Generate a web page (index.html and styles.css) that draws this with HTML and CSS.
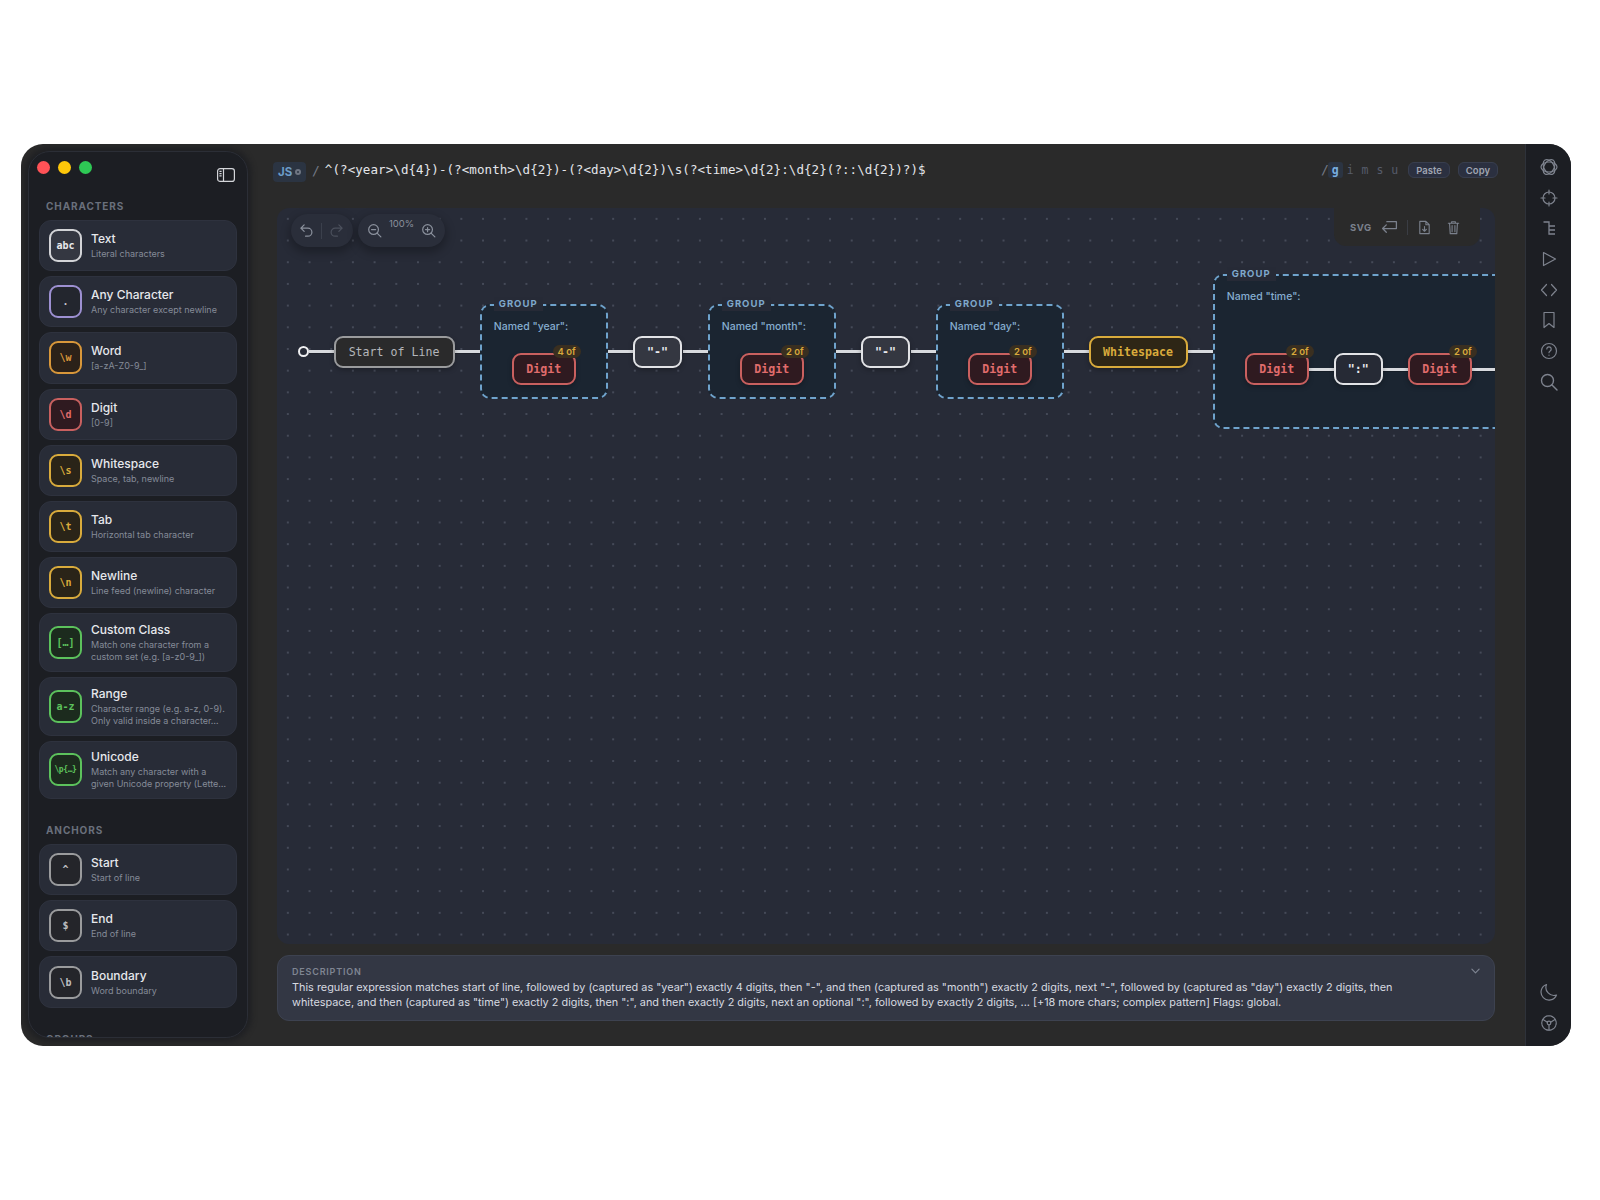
FILE: index.html
```html
<!DOCTYPE html>
<html lang="en">
<head>
    <meta charset="UTF-8">
    <title>Regex Builder</title>
    <link rel="stylesheet" href="styles.css">
</head>
<body>
    <div class="window">
        <aside class="sidebar">
            <div class="side-top">
                <div class="lights">
                    <span class="light red"></span>
                    <span class="light yellow"></span>
                    <span class="light green"></span>
                </div>
                <svg class="side-toggle" viewBox="0 0 18 14" fill="none" stroke="currentColor" stroke-width="1.2">
                    <rect x="0.6" y="0.6" width="16.8" height="12.8" rx="2.5"/>
                    <path d="M6.5 0.6v12.8M2.4 3.4h2.2M2.4 5.6h2.2M2.4 7.8h2.2" />
                </svg>
            </div>

            <h3 class="section-label">Characters</h3>
            <div class="cards">
                <div class="card"><span class="glyph g-text">abc</span><div class="card-text"><b>Text</b><small>Literal characters</small></div></div>
                <div class="card"><span class="glyph g-any">.</span><div class="card-text"><b>Any Character</b><small>Any character except newline</small></div></div>
                <div class="card"><span class="glyph g-word">\w</span><div class="card-text"><b>Word</b><small>[a-zA-Z0-9_]</small></div></div>
                <div class="card"><span class="glyph g-digit">\d</span><div class="card-text"><b>Digit</b><small>[0-9]</small></div></div>
                <div class="card"><span class="glyph g-space">\s</span><div class="card-text"><b>Whitespace</b><small>Space, tab, newline</small></div></div>
                <div class="card"><span class="glyph g-space">\t</span><div class="card-text"><b>Tab</b><small>Horizontal tab character</small></div></div>
                <div class="card"><span class="glyph g-space">\n</span><div class="card-text"><b>Newline</b><small>Line feed (newline) character</small></div></div>
                <div class="card"><span class="glyph g-class">[…]</span><div class="card-text"><b>Custom Class</b><small>Match one character from a<br>custom set (e.g. [a-z0-9_])</small></div></div>
                <div class="card"><span class="glyph g-class">a-z</span><div class="card-text"><b>Range</b><small>Character range (e.g. a-z, 0-9).<br>Only valid inside a character…</small></div></div>
                <div class="card"><span class="glyph g-class g-small">\p{…}</span><div class="card-text"><b>Unicode</b><small>Match any character with a<br>given Unicode property (Lette…</small></div></div>
            </div>

            <h3 class="section-label spaced">Anchors</h3>
            <div class="cards">
                <div class="card"><span class="glyph g-anchor">^</span><div class="card-text"><b>Start</b><small>Start of line</small></div></div>
                <div class="card"><span class="glyph g-anchor">$</span><div class="card-text"><b>End</b><small>End of line</small></div></div>
                <div class="card"><span class="glyph g-anchor">\b</span><div class="card-text"><b>Boundary</b><small>Word boundary</small></div></div>
            </div>

            <h3 class="section-label spaced">Groups</h3>
        </aside>

        <main class="main">
            <header class="regex-bar">
                <span class="lang">JS<i></i></span>
                <span class="slash">/</span>
                <code class="pattern">^(?&lt;year&gt;\d{4})-(?&lt;month&gt;\d{2})-(?&lt;day&gt;\d{2})\s(?&lt;time&gt;\d{2}:\d{2}(?::\d{2})?)$</code>
                <div class="flags">
                    <span class="slash">/</span>
                    <span class="flag on">g</span>
                    <span class="flag">i</span>
                    <span class="flag">m</span>
                    <span class="flag">s</span>
                    <span class="flag">u</span>
                </div>
                <button class="pill">Paste</button>
                <button class="pill">Copy</button>
            </header>

            <section class="canvas">
                <div class="tools-left">
                    <div class="tool-pill history">
                        <svg class="ico" viewBox="0 0 16 16" fill="none" stroke="currentColor" stroke-width="1.3" stroke-linecap="round" stroke-linejoin="round"><path d="M5.5 2L2 5.5 5.5 9M2 5.5h7.5a4.2 4.2 0 010 8.5H7"/></svg>
                        <span class="tool-sep"></span>
                        <svg class="ico dim" viewBox="0 0 16 16" fill="none" stroke="currentColor" stroke-width="1.3" stroke-linecap="round" stroke-linejoin="round"><path d="M10.5 2L14 5.5 10.5 9M14 5.5H6.500a4.200 4.200 0 000 8.500H9"/></svg>
                    </div>
                    <div class="tool-pill zoom">
                        <svg class="ico" viewBox="0 0 16 16" fill="none" stroke="currentColor" stroke-width="1.3" stroke-linecap="round"><circle cx="7" cy="7" r="5.2"/><path d="M11 11l3.800 3.800M4.800 7h4.400"/></svg>
                        <span class="zoom-val">100%</span>
                        <svg class="ico" viewBox="0 0 16 16" fill="none" stroke="currentColor" stroke-width="1.3" stroke-linecap="round"><circle cx="7" cy="7" r="5.2"/><path d="M11 11l3.800 3.800M4.800 7h4.400M7 4.800v4.400"/></svg>
                    </div>
                </div>

                <div class="tools-right">
                    <span class="svg-label">SVG</span>
                    <svg class="ico wide" viewBox="0 0 16 14" fill="none" stroke="currentColor" stroke-width="1.2" stroke-linecap="round" stroke-linejoin="round"><path d="M5.500 1.500h9v6.500H1.500M5 4.500L1.500 8 5 11.500"/></svg>
                    <span class="tool-sep tall"></span>
                    <svg class="ico" viewBox="0 0 16 16" fill="none" stroke="currentColor" stroke-width="1.2" stroke-linecap="round" stroke-linejoin="round"><path d="M3 1.500h6.500L13 5v9.500H3zM9.500 1.500V5H13M8 7v5M6 10l2 2 2-2"/></svg>
                    <svg class="ico" viewBox="0 0 16 16" fill="none" stroke="currentColor" stroke-width="1.2" stroke-linecap="round" stroke-linejoin="round"><path d="M2.500 3.500h11M6 3.500V1.800h4v1.700M3.800 3.500l.7 11h7l.7-11M6.500 6v6.500M9.500 6v6.500"/></svg>
                </div>

                <div class="track">
                    <span class="origin"></span>
                    <span class="wire"></span>
                    <div class="node anchor">Start of Line</div>
                    <span class="wire"></span>

                    <div class="group">
                        <span class="group-tag">GROUP</span>
                        <p class="group-name">Named "year":</p>
                        <div class="node digit">Digit<span class="badge">4 of</span></div>
                    </div>
                    <span class="wire"></span>
                    <div class="node lit">"-"</div>
                    <span class="wire"></span>

                    <div class="group">
                        <span class="group-tag">GROUP</span>
                        <p class="group-name">Named "month":</p>
                        <div class="node digit">Digit<span class="badge">2 of</span></div>
                    </div>
                    <span class="wire"></span>
                    <div class="node lit">"-"</div>
                    <span class="wire"></span>

                    <div class="group">
                        <span class="group-tag">GROUP</span>
                        <p class="group-name">Named "day":</p>
                        <div class="node digit">Digit<span class="badge">2 of</span></div>
                    </div>
                    <span class="wire"></span>
                    <div class="node space">Whitespace</div>
                    <span class="wire"></span>

                    <div class="group time">
                        <span class="group-tag">GROUP</span>
                        <p class="group-name">Named "time":</p>
                        <div class="group-row">
                            <div class="node digit">Digit<span class="badge">2 of</span></div>
                            <span class="wire short"></span>
                            <div class="node lit colon">":"</div>
                            <span class="wire short"></span>
                            <div class="node digit">Digit<span class="badge">2 of</span></div>
                            <span class="wire short"></span>
                        </div>
                    </div>
                </div>
            </section>

            <section class="description">
                <div class="desc-head">
                    <span>DESCRIPTION</span>
                    <svg viewBox="0 0 10 6" fill="none" stroke="currentColor" stroke-width="1.300" stroke-linecap="round" stroke-linejoin="round"><path d="M1 1l4 4 4-4"/></svg>
                </div>
                <p>This regular expression matches start of line, followed by (captured as "year") exactly 4 digits, then "-", and then (captured as "month") exactly 2 digits, next "-", followed by (captured as "day") exactly 2 digits, then whitespace, and then (captured as "time") exactly 2 digits, then ":", and then exactly 2 digits, next an optional ":", followed by exactly 2 digits, ... [+18 more chars; complex pattern] Flags: global.</p>
            </section>
        </main>

        <nav class="rail">
            <svg viewBox="0 0 18 18" fill="none" stroke="currentColor" stroke-width="1.200"><ellipse cx="9" cy="9" rx="8" ry="5"/><ellipse cx="9" cy="9" rx="8" ry="5" transform="rotate(60 9 9)"/><ellipse cx="9" cy="9" rx="8" ry="5" transform="rotate(120 9 9)"/></svg>
            <svg viewBox="0 0 18 18" fill="none" stroke="currentColor" stroke-width="1.200" stroke-linecap="round"><circle cx="9" cy="9" r="6"/><path d="M9 1v4M9 13v4M1 9h4M13 9h4"/></svg>
            <svg viewBox="0 0 18 18" fill="none" stroke="currentColor" stroke-width="1.300"><path d="M3.500 3h5.500v12h6M9 7h6M9 11h6"/></svg>
            <svg viewBox="0 0 18 18" fill="none" stroke="currentColor" stroke-width="1.200" stroke-linejoin="round"><path d="M3.500 2.500L15.500 9 3.500 15.500z"/></svg>
            <svg viewBox="0 0 18 18" fill="none" stroke="currentColor" stroke-width="1.200" stroke-linecap="round" stroke-linejoin="round"><path d="M6.500 3.500L1.500 9l5 5.500M11.500 3.500l5 5.500-5 5.500"/></svg>
            <svg viewBox="0 0 18 18" fill="none" stroke="currentColor" stroke-width="1.200" stroke-linejoin="round"><path d="M4 1.500h10v15l-5-4-5 4z"/></svg>
            <svg viewBox="0 0 18 18" fill="none" stroke="currentColor" stroke-width="1.200" stroke-linecap="round"><circle cx="9" cy="9" r="7.500"/><path d="M6.800 7a2.200 2.200 0 113.400 1.900c-.8.500-1.200 1-1.200 1.800M9 13v.2"/></svg>
            <svg viewBox="0 0 18 18" fill="none" stroke="currentColor" stroke-width="1.400" stroke-linecap="round"><circle cx="7.500" cy="7.500" r="6"/><path d="M12 12l5 5"/></svg>
            <span class="rail-gap"></span>
            <svg viewBox="0 0 18 18" fill="none" stroke="currentColor" stroke-width="1.200" stroke-linejoin="round"><path d="M6.500 1.500a8 8 0 0010 10.500A8 8 0 116.500 1.500z"/></svg>
            <svg viewBox="0 0 18 18" fill="none" stroke="currentColor" stroke-width="1.200" stroke-linecap="round"><circle cx="9" cy="9" r="7.200" stroke-dasharray="2.200 .8"/><circle cx="9" cy="9" r="1.800"/><path d="M10.600 8.200L15 5.500M7.400 8.200L3 5.500M9 10.800V16"/></svg>
        </nav>
    </div>
</body>
</html>
```

FILE: styles.css
```css
* {
    margin: 0;
    padding: 0;
    box-sizing: border-box;
}
body {
    background: #fff;
    font-family: Inter, "Noto Sans", sans-serif;
    padding: 144px 0 0 21px;
}
.window {
    width: 1550px;
    height: 902px;
    background: #2a2a2a;
    border-radius: 22px;
    display: flex;
    overflow: hidden;
}

/* sidebar */
.sidebar {
    flex: none;
    width: 220px;
    height: 887px;
    margin: 7px;
    padding: 0 10px;
    background: #1c1e23;
    border: 1px solid #2b2e36;
    border-radius: 22px;
    overflow: hidden;
    box-shadow: 0 0 5px 4px #202124;
}
.side-top {
    height: 47px;
    display: flex;
    justify-content: space-between;
    align-items: flex-start;
}
.lights {
    display: flex;
    gap: 8px;
    margin: 9px 0 0 -2px;
}
.light {
    width: 13px;
    height: 13px;
    border-radius: 50%;
}
.red { background: #ff5257; }
.yellow { background: #fec70a; }
.green { background: #2ec955; }
.side-toggle {
    width: 18px;
    height: 14px;
    color: #d4d6da;
    margin: 16px 2px 0 0;
}
.section-label {
    font-size: 10px;
    line-height: 14px;
    font-weight: 700;
    letter-spacing: .9px;
    text-transform: uppercase;
    color: #6a707c;
    margin: 0 0 7px 7px;
}
.section-label.spaced {
    margin-top: 24px;
}
.cards {
    display: flex;
    flex-direction: column;
    gap: 5px;
}
.card {
    min-height: 51.2px;
    padding: 7.800px 9px;
    background: #282c37;
    border: 1px solid #2e323e;
    border-radius: 12px;
    display: flex;
    align-items: center;
    gap: 9px;
}
.glyph {
    flex: none;
    width: 33px;
    height: 33px;
    border: 2px solid;
    border-radius: 9px;
    display: flex;
    align-items: center;
    justify-content: center;
    font-family: "DejaVu Sans Mono", monospace;
    font-size: 10px;
    font-weight: 700;
}
.g-text { border-color: #d2d3d6; background: #343741; color: #e8e9ec; }
.g-any { border-color: #9d90d2; background: #23262e; color: #c8c8d0; }
.g-word { border-color: #d8973a; background: #2b2119; color: #d8973a; }
.g-digit { border-color: #c9605f; background: #2f1a20; color: #e06c6c; }
.g-space { border-color: #d9ab3c; background: #2a2418; color: #d9ab3c; }
.g-class { border-color: #5cc25c; background: #1c2b1e; color: #5cc25c; }
.g-small { font-size: 8px; letter-spacing: -0.4px; }
.g-anchor { border-color: #9a9b9d; background: #24252a; color: #bcbdc0; }
.card-text b {
    display: block;
    font-size: 12px;
    line-height: 16px;
    font-weight: 500;
    color: #e6e8ec;
    margin-bottom: 1px;
}
.card-text small {
    display: block;
    font-size: 9px;
    line-height: 12px;
    color: #858b98;
    white-space: nowrap;
}

/* main */
.main {
    flex: 1;
    min-width: 0;
    padding: 0 30px 25px 22px;
    display: flex;
    flex-direction: column;
}
.regex-bar {
    height: 64px;
    flex: none;
    padding: 18px 0 0 18px;
    margin: 0 -3px 0 -22px;
    display: flex;
    align-items: flex-start;
}
.lang {
    width: 33px;
    height: 20px;
    background: #2b3442;
    border-radius: 4px;
    color: #6c9cc8;
    font-size: 11.500px;
    font-weight: 700;
    display: flex;
    align-items: center;
    padding-left: 5px;
    gap: 3px;
}
.lang i {
    width: 6px;
    height: 6px;
    border-radius: 50%;
    border: 2px solid #6f7683;
}
.slash {
    color: #737986;
    font-family: "DejaVu Sans Mono", monospace;
    font-size: 13px;
    line-height: 18px;
    margin-left: 6px;
}
.pattern {
    margin-left: 5px;
    font-family: "DejaVu Sans Mono", monospace;
    font-size: 12.500px;
    letter-spacing: .08px;
    line-height: 16px;
    color: #e4e6ea;
}
.flags {
    margin-left: auto;
    display: flex;
    align-items: center;
    font-family: "DejaVu Sans Mono", monospace;
    font-size: 11.500px;
    height: 16px;
}
.flags .slash {
    margin: 0 -1px 0 0;
    line-height: 16px;
}
.flag {
    width: 14.900px;
    height: 16px;
    text-align: center;
    line-height: 16px;
    color: #565c6a;
}
.flag.on {
    background: #2b3442;
    border-radius: 3px;
    color: #79aee0;
    font-weight: 700;
}
.pill {
    height: 16px;
    margin-left: 8px;
    padding: 0 7px;
    font-family: inherit;
    font-size: 9.500px;
    font-weight: 600;
    color: #a0a6b2;
    background: #2b3040;
    border: 1px solid #383e4e;
    border-radius: 6px;
}
.flags + .pill {
    margin-left: 6px;
}
.canvas {
    flex: 1;
    min-height: 0;
    position: relative;
    overflow: hidden;
    border-radius: 12px;
    background-color: #272b37;
    background-image: radial-gradient(circle, #454a58 1px, transparent 1.2px);
    background-size: 21.700px 21.700px;
}
.track {
    display: flex;
    align-items: center;
    padding: 66px 0 0 20.500px;
    width: max-content;
}
.origin {
    flex: none;
    width: 11px;
    height: 11px;
    border: 2.500px solid #f0f0f2;
    border-radius: 50%;
}
.wire {
    flex: none;
    width: 26px;
    height: 3px;
    background: #d8dade;
    box-shadow: 0 1px 0 #0003;
}
.origin + .wire {
    width: 25px;
}
.wire.short {
    width: 25px;
}
.node {
    flex: none;
    position: relative;
    height: 32px;
    border: 2px solid;
    border-radius: 9px;
    display: flex;
    align-items: center;
    justify-content: center;
    font-family: "DejaVu Sans Mono", monospace;
    font-size: 11.600px;
    box-shadow: 0 2px 5px #0004;
}
.anchor {
    width: 121px;
    border-color: #9a9b9d;
    background: #2a2a2b;
    color: #b4b6ba;
}
.lit {
    width: 49px;
    margin: 0 .5px 0 -.5px;
    border-color: #e2e3e6;
    background: #343741;
    color: #e8e9ec;
    font-weight: 700;
}
.colon {
    background: #262a35;
}
.space {
    width: 99px;
    margin: 0 0 0 -1px;
    border-color: #d9ab3c;
    background: #2e2616;
    color: #d9ab3c;
    font-weight: 700;
}
.digit {
    width: 64px;
    border-color: #c9605f;
    background: #2f1a20;
    color: #e06c6c;
    font-weight: 700;
}
.badge {
    position: absolute;
    top: -10px;
    right: -7px;
    height: 13px;
    padding: 0 5px;
    background: #3a2f20;
    border-radius: 7px;
    color: #d9a93c;
    font-family: Inter, sans-serif;
    font-size: 9.500px;
    font-weight: 600;
    line-height: 13px;
}
.group {
    flex: none;
    position: relative;
    width: 128.500px;
    height: 95px;
    margin: 0 -.75px;
    padding: 14px 0 0 12px;
    background: #1b2531;
    border: 2px dashed #6fa3cc;
    border-radius: 10px;
}
.group .digit {
    margin: 19px 0 0 18px;
}
.group-tag {
    position: absolute;
    top: -9px;
    left: 12px;
    padding: 0 5px;
    background: #262a36;
    color: #7fa8cc;
    font-size: 9.500px;
    line-height: 14px;
    font-weight: 700;
    letter-spacing: 1px;
}
.group-name {
    font-size: 10.500px;
    line-height: 14px;
    font-weight: 500;
    color: #86aed0;
    white-space: nowrap;
}
.group.time {
    width: 420px;
    height: 155px;
}
.group-row {
    display: flex;
    align-items: center;
    margin: 49px 0 0 18px;
}
.group-row .digit {
    margin: 0;
}
.group-row .lit {
    margin: 0;
}

/* canvas tool overlays */
.tools-left {
    position: absolute;
    top: 6px;
    left: 14px;
    display: flex;
    gap: 5px;
}
.tool-pill {
    height: 33px;
    border-radius: 17px;
    background: #2a2e3a;
    box-shadow: 0 4px 9px 2px #00000040;
    display: flex;
    align-items: center;
    color: #8a909c;
}
.history {
    width: 62px;
    padding: 0 9px 0 8px;
    gap: 6px;
    justify-content: space-between;
}
.zoom {
    width: 87px;
    padding: 0 9px;
    justify-content: space-between;
}
.zoom-val {
    align-self: flex-start;
    margin-top: 3px;
    font-size: 9.500px;
    line-height: 14px;
    color: #8a909c;
}
.ico {
    flex: none;
    width: 15px;
    height: 15px;
}
.ico.dim {
    color: #4b505c;
}
.ico.wide {
    width: 17px;
}
.tool-sep {
    width: 1px;
    height: 16px;
    background: #3b404c;
}
.tools-right {
    position: absolute;
    top: 0;
    right: 15px;
    width: 146px;
    height: 38px;
    padding-left: 16px;
    background: #2a2a2a;
    border-radius: 0 0 12px 12px;
    display: flex;
    align-items: center;
    color: #7b818d;
}
.tools-right > :nth-child(2) { margin-left: 9px; }
.tools-right > :nth-child(3) { margin-left: 9px; }
.tools-right > :nth-child(4) { margin-left: 9px; }
.tools-right > :nth-child(5) { margin-left: 14px; }
.svg-label {
    font-size: 9.500px;
    font-weight: 700;
    letter-spacing: .5px;
}
.tool-sep.tall {
    height: 15px;
    background: #3a3d44;
}
.description {
    flex: none;
    height: 66px;
    margin-top: 11px;
    padding: 8px 14px 0 14px;
    background: #333744;
    border: 1px solid #3d4250;
    border-radius: 12px;
}
.desc-head {
    display: flex;
    justify-content: space-between;
    align-items: center;
    height: 14px;
    margin-bottom: 1.500px;
    color: #7f8592;
    font-size: 9px;
    font-weight: 600;
    letter-spacing: .8px;
}
.desc-head svg {
    width: 9px;
    height: 6px;
}
.description p {
    font-size: 10.880px;
    line-height: 15.300px;
    color: #d7dae0;
    padding-right: 60px;
}

/* right rail */
.rail {
    flex: none;
    width: 46px;
    background: #1c1e23;
    border-left: 1px solid #2e323a;
    padding: 14px 0 14px;
    display: flex;
    flex-direction: column;
    align-items: center;
    gap: 12.700px;
    color: #7e838e;
}
.rail svg {
    flex: none;
    width: 18px;
    height: 18px;
}
.rail-gap {
    flex: 1;
}
```
